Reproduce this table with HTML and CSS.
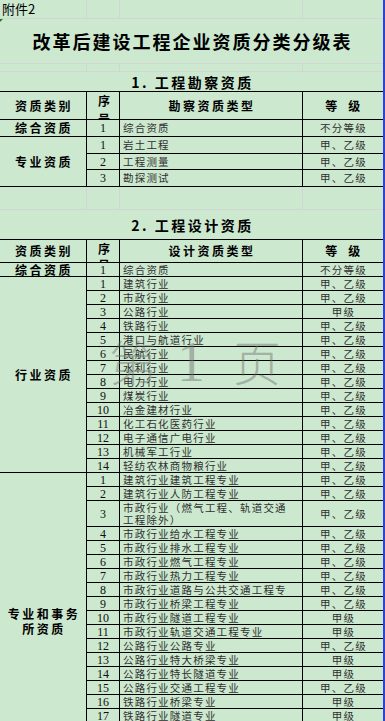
FILE: index.html
```html
<!DOCTYPE html>
<html lang="zh">
<head>
<meta charset="utf-8">
<title>改革后建设工程企业资质分类分级表</title>
<link rel="stylesheet" href="styles.css">
</head>
<body>
<div class="sheet">
<table class="grid">
<colgroup><col class="c-a"><col class="c-b"><col class="c-c"><col class="c-d"></colgroup>
<tbody>
<tr class="h19"><td class="g note">附件2</td><td class="g"></td><td class="g"></td><td class="g end"></td></tr>
<tr class="h45"><td colspan="4" class="gb title"><span class="flag"></span>改革后建设工程企业资质分类分级表</td></tr>
<tr class="h8"><td class="g"></td><td class="g"></td><td class="g"></td><td class="g end"></td></tr>
<tr class="h20"><td colspan="4" class="kb section">1. 工程勘察资质</td></tr>
<tr class="h28"><td class="k hd">资质类别</td><td class="k hd top"><div class="clip clip27">序<br>号</div></td><td class="k hd">勘察资质类型</td><td class="k hd end">等&ensp;级</td></tr>
<tr class="h17"><td class="k cat">综合资质</td><td class="k num">1</td><td class="k type">综合资质</td><td class="k grade end">不分等级</td></tr>
<tr class="h17"><td class="k cat" rowspan="3">专业资质</td><td class="k num">1</td><td class="k type">岩土工程</td><td class="k grade end">甲、乙级</td></tr>
<tr class="h16"><td class="k num">2</td><td class="k type">工程测量</td><td class="k grade end">甲、乙级</td></tr>
<tr class="h17"><td class="k num">3</td><td class="k type">勘探测试</td><td class="k grade end">甲、乙级</td></tr>
<tr class="h23"><td class="g"></td><td class="g"></td><td class="g"></td><td class="g end"></td></tr>
<tr class="h30"><td colspan="4" class="kb section">2. 工程设计资质</td></tr>
<tr class="h22"><td class="k hd">资质类别</td><td class="k hd top"><div class="clip clip21">序<br>号</div></td><td class="k hd">设计资质类型</td><td class="k hd end">等&ensp;级</td></tr>
<tr class="h14"><td class="k cat">综合资质</td><td class="k num">1</td><td class="k type">综合资质</td><td class="k grade end">不分等级</td></tr>
<tr class="h14"><td class="k cat" rowspan="14">行业资质</td><td class="k num">1</td><td class="k type">建筑行业</td><td class="k grade end">甲、乙级</td></tr>
<tr class="h14"><td class="k num">2</td><td class="k type">市政行业</td><td class="k grade end">甲、乙级</td></tr>
<tr class="h14"><td class="k num">3</td><td class="k type">公路行业</td><td class="k grade end">甲级</td></tr>
<tr class="h14"><td class="k num">4</td><td class="k type">铁路行业</td><td class="k grade end">甲、乙级</td></tr>
<tr class="h14"><td class="k num">5</td><td class="k type">港口与航道行业</td><td class="k grade end">甲、乙级</td></tr>
<tr class="h14"><td class="k num">6</td><td class="k type">民航行业</td><td class="k grade end">甲、乙级</td></tr>
<tr class="h14"><td class="k num">7</td><td class="k type">水利行业</td><td class="k grade end">甲、乙级</td></tr>
<tr class="h14"><td class="k num">8</td><td class="k type">电力行业</td><td class="k grade end">甲、乙级</td></tr>
<tr class="h14"><td class="k num">9</td><td class="k type">煤炭行业</td><td class="k grade end">甲、乙级</td></tr>
<tr class="h14"><td class="k num">10</td><td class="k type">冶金建材行业</td><td class="k grade end">甲、乙级</td></tr>
<tr class="h14"><td class="k num">11</td><td class="k type">化工石化医药行业</td><td class="k grade end">甲、乙级</td></tr>
<tr class="h14"><td class="k num">12</td><td class="k type">电子通信广电行业</td><td class="k grade end">甲、乙级</td></tr>
<tr class="h14"><td class="k num">13</td><td class="k type">机械军工行业</td><td class="k grade end">甲、乙级</td></tr>
<tr class="h14"><td class="k num">14</td><td class="k type">轻纺农林商物粮行业</td><td class="k grade end">甲、乙级</td></tr>
<tr class="h14"><td class="k cat top" rowspan="18"><div class="cat2">专业和事务<br>所资质</div></td><td class="k num">1</td><td class="k type">建筑行业建筑工程专业</td><td class="k grade end">甲、乙级</td></tr>
<tr class="h14"><td class="k num">2</td><td class="k type">建筑行业人防工程专业</td><td class="k grade end">甲、乙级</td></tr>
<tr class="h26"><td class="k num">3</td><td class="k type">市政行业（燃气工程、轨道交通<br>工程除外）</td><td class="k grade end">甲、乙级</td></tr>
<tr class="h14"><td class="k num">4</td><td class="k type">市政行业给水工程专业</td><td class="k grade end">甲、乙级</td></tr>
<tr class="h14"><td class="k num">5</td><td class="k type">市政行业排水工程专业</td><td class="k grade end">甲、乙级</td></tr>
<tr class="h14"><td class="k num">6</td><td class="k type">市政行业燃气工程专业</td><td class="k grade end">甲、乙级</td></tr>
<tr class="h14"><td class="k num">7</td><td class="k type">市政行业热力工程专业</td><td class="k grade end">甲、乙级</td></tr>
<tr class="h14"><td class="k num">8</td><td class="k type">市政行业道路与公共交通工程专</td><td class="k grade end">甲、乙级</td></tr>
<tr class="h14"><td class="k num">9</td><td class="k type">市政行业桥梁工程专业</td><td class="k grade end">甲、乙级</td></tr>
<tr class="h14"><td class="k num">10</td><td class="k type">市政行业隧道工程专业</td><td class="k grade end">甲级</td></tr>
<tr class="h14"><td class="k num">11</td><td class="k type">市政行业轨道交通工程专业</td><td class="k grade end">甲级</td></tr>
<tr class="h14"><td class="k num">12</td><td class="k type">公路行业公路专业</td><td class="k grade end">甲、乙级</td></tr>
<tr class="h14"><td class="k num">13</td><td class="k type">公路行业特大桥梁专业</td><td class="k grade end">甲级</td></tr>
<tr class="h14"><td class="k num">14</td><td class="k type">公路行业特长隧道专业</td><td class="k grade end">甲级</td></tr>
<tr class="h14"><td class="k num">15</td><td class="k type">公路行业交通工程专业</td><td class="k grade end">甲、乙级</td></tr>
<tr class="h14"><td class="k num">16</td><td class="k type">铁路行业桥梁专业</td><td class="k grade end">甲级</td></tr>
<tr class="h14"><td class="k num">17</td><td class="k type">铁路行业隧道专业</td><td class="k grade end">甲级</td></tr>
<tr class="h14"><td class="k num">18</td><td class="k type">铁路行业电气化专业</td><td class="k grade end">甲级</td></tr>
</tbody>
</table>
<div class="wm"><span>第</span><span class="wm-num">1</span><span class="wm-ye">页</span></div>
</div>
</body>
</html>
```
FILE: styles.css
```css
html, body {
  margin: 0;
  padding: 0;
}
body {
  background: #cce8cf;
  width: 385px;
  height: 721px;
  overflow: hidden;
  font-family: "Noto Sans CJK SC", "Noto Sans", sans-serif;
  color: #1e1e1e;
}
.sheet {
  position: relative;
  width: 383px;
  height: 721px;
  border-right: 2px solid #2a44d6;
  overflow: hidden;
}
.grid {
  border-collapse: separate;
  border-spacing: 0;
  table-layout: fixed;
  width: 383px;
}
.c-a { width: 87px; }
.c-b { width: 33px; }
.c-c { width: 183px; }
.c-d { width: 80px; }

td {
  padding: 0;
  font-size: 10.5px;
  line-height: 12px;
  white-space: nowrap;
  overflow: hidden;
  vertical-align: middle;
  box-sizing: border-box;
}
.h8 { height: 8px; }
.h14 { height: 14px; }
.h16 { height: 16px; }
.h17 { height: 17px; }
.h19 { height: 19px; }
.h20 { height: 20px; }
.h22 { height: 22px; }
.h23 { height: 23px; }
.h26 { height: 26px; }
.h28 { height: 28px; }
.h30 { height: 30px; }
.h45 { height: 45px; }

.g { border-right: 1px solid #d2d6d2; border-bottom: 1px solid #d2d6d2; }
.gb { border-bottom: 1px solid #d2d6d2; }
.k { border-right: 1px solid #000; border-bottom: 1px solid #000; }
.kb { border-bottom: 1px solid #000; }
.end { border-right: none; }

.note {
  font-size: 13px;
  line-height: 16px;
  padding-left: 2px;
  color: #000;
  overflow: visible;
}
.title {
  position: relative;
  text-align: center;
  font-size: 18px;
  line-height: 22px;
  font-weight: 700;
  letter-spacing: 2px;
  padding-left: 2px;
  color: #000;
}
.flag {
  position: absolute;
  left: 0;
  top: 0;
  width: 0;
  height: 0;
  border-top: 3px solid #1f7a1f;
  border-right: 3px solid transparent;
}
.section {
  text-align: center;
  font-size: 14px;
  line-height: 16px;
  font-weight: 700;
  letter-spacing: 2.5px;
  padding-left: 2px;
  color: #000;
}
.hd {
  text-align: center;
  font-size: 12px;
  line-height: 14px;
  font-weight: 700;
  letter-spacing: 2.5px;
  padding-left: 2px;
  color: #000;
}
.top { vertical-align: top; }
.clip { overflow: hidden; letter-spacing: 0; }
.clip27 { height: 27px; line-height: 18px; }
.clip21 { height: 21px; line-height: 16px; margin-top: 1px; }

.cat {
  text-align: center;
  font-size: 12px;
  line-height: 12px;
  font-weight: 700;
  letter-spacing: 2.5px;
  padding-left: 2px;
  color: #000;
}
.cat2 {
  padding-top: 133px;
  line-height: 15px;
}
.num {
  text-align: center;
  font-family: "Liberation Serif", serif;
  font-size: 12px;
  color: #111;
}
.type {
  text-align: left;
  padding-left: 3px;
  letter-spacing: 1.2px;
  color: #303030;
}
.grade {
  text-align: center;
  letter-spacing: 1.2px;
  padding-left: 1px;
  color: #303030;
}

.wm {
  position: absolute;
  left: 109px;
  top: 334px;
  display: flex;
  align-items: baseline;
  font-size: 48px;
  line-height: 52px;
  font-weight: 300;
  color: rgba(110, 110, 110, 0.45);
  pointer-events: none;
}
.wm-num {
  font-family: "Liberation Serif", serif;
  font-size: 56px;
  margin-left: 20px;
}
.wm-ye {
  margin-left: 28px;
}
```
